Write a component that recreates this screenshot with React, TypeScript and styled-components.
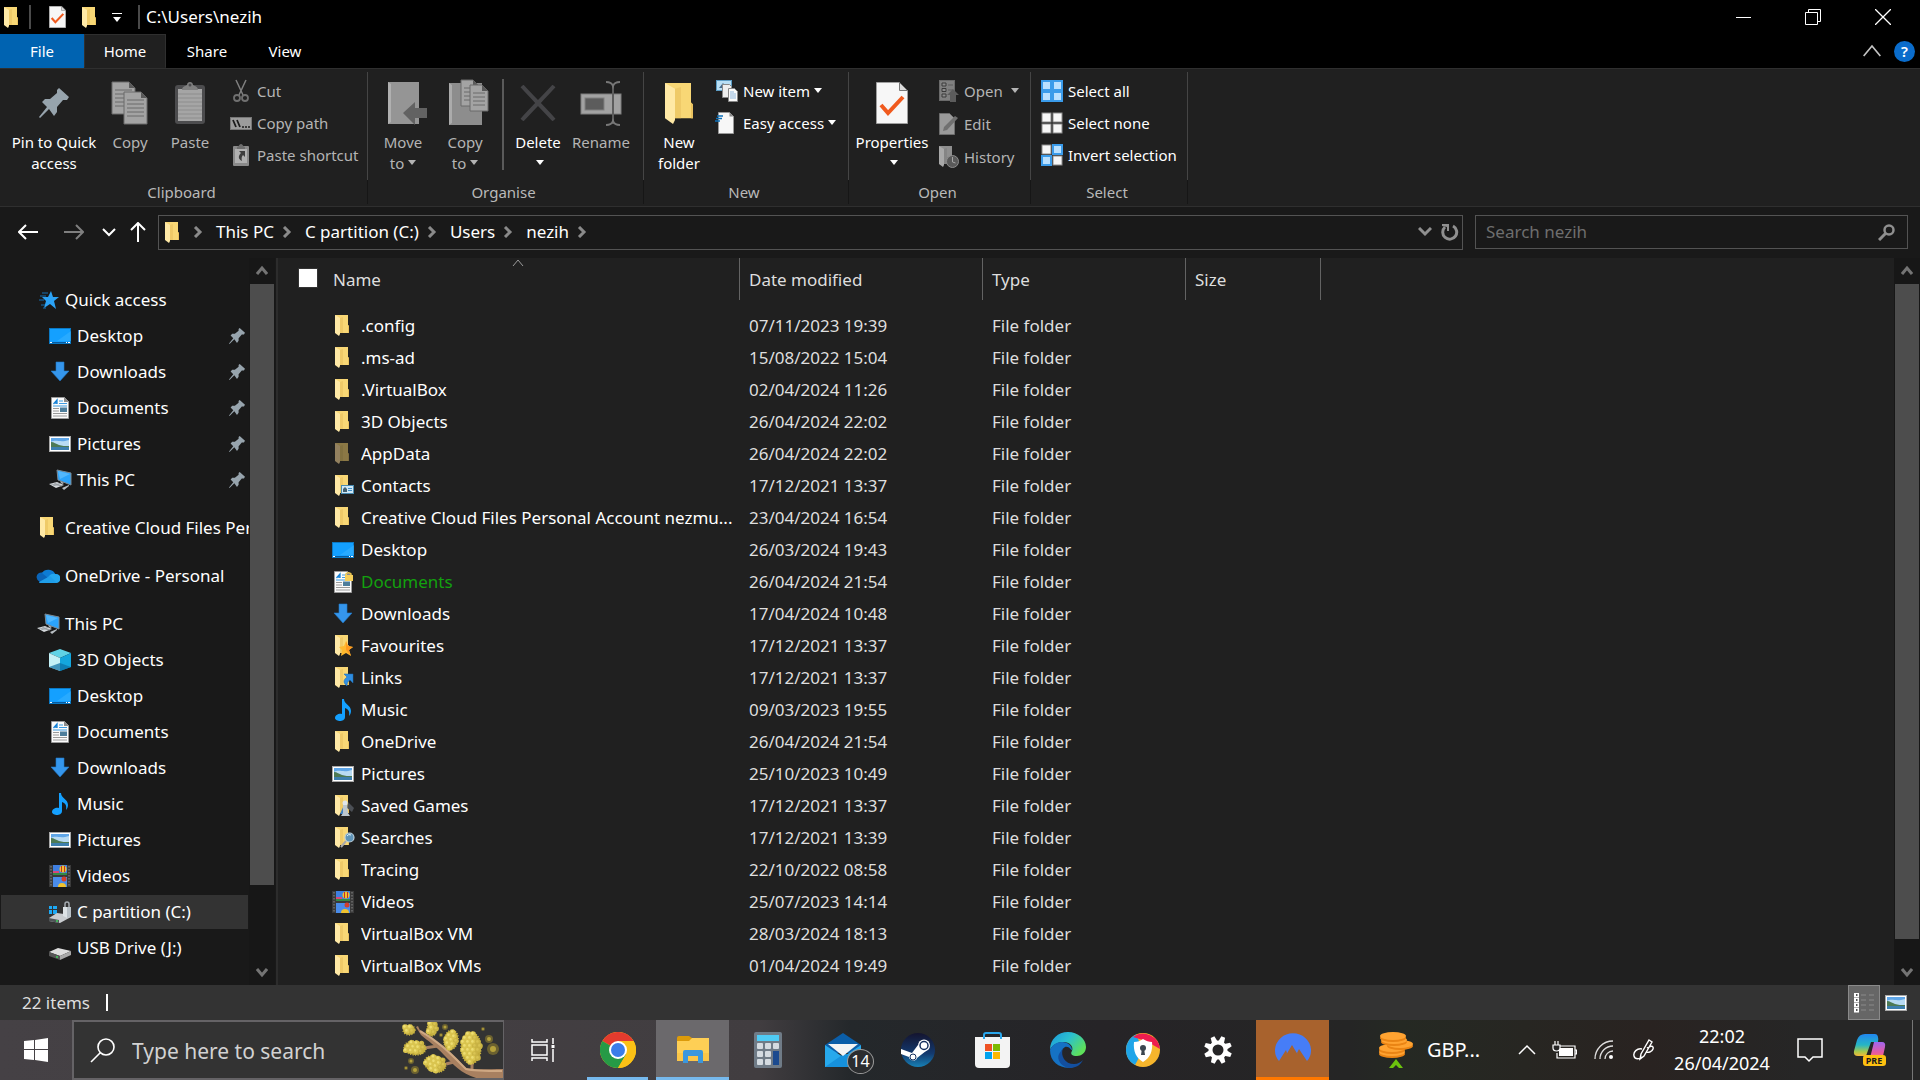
import React from "react";
import styled, { createGlobalStyle, css } from "styled-components";

const GlobalStyle = createGlobalStyle`
  *, *::before, *::after { box-sizing: border-box; }
  body {
    margin: 0;
    background: #191919;
    color: #fff;
    font-family: "Noto Sans", "Segoe UI", sans-serif;
    font-size: 17px;
    line-height: 24px;
  }
  button, input { font: inherit; color: inherit; }
  button { background: none; border: 0; padding: 0; cursor: default; }
  a { color: inherit; text-decoration: none; }
  svg { display: block; flex: none; }
`;

/* ---------- icons ---------- */

type FolderTone = "yellow" | "dim" | "grey";
const folderTones: Record<FolderTone, [string, string, string]> = {
  yellow: ["#f8d775", "#ffe9a6", "#e9c25f"],
  dim: ["#8b7845", "#93815f", "#7d6c3e"],
  grey: ["#8f8f8f", "#a9a9a9", "#7f7f7f"],
};

const FolderShape = ({ tone = "yellow" }: { tone?: FolderTone }) => {
  const [back, flap, edge] = folderTones[tone];
  return (
    <>
      <path d="M0 0h13v10l1 1v7H4z" fill={back} />
      <path d="M13 10l1 1v7h-1z" fill={edge} />
      <path d="M5 3v15h3V2z" fill={edge} opacity=".6" />
      <path d="M0 0l5 3v16l-1 2-4-3z" fill={flap} />
    </>
  );
};

const FolderIcon = ({ w = 14, h = 21, tone }: { w?: number; h?: number; tone?: FolderTone }) => (
  <svg width={w} height={h} viewBox="0 0 14 21" preserveAspectRatio="none" aria-hidden>
    <FolderShape tone={tone} />
  </svg>
);

const Glyph = ({ children }: { children: React.ReactNode }) => (
  <svg width="22" height="22" viewBox="0 0 22 22" overflow="visible" aria-hidden>
    {children}
  </svg>
);

const FolderGlyph = ({ tone, children }: { tone?: FolderTone; children?: React.ReactNode }) => (
  <Glyph>
    <g transform="translate(3 0)">
      <FolderShape tone={tone} />
    </g>
    {children}
  </Glyph>
);

const DocShape = () => (
  <>
    <path d="M2.500.5h13l4 4v17h-17z" fill="#fbfbfb" stroke="#9b9b9b" />
    <path d="M15 0v5h5z" fill="#8d8d8d" />
    <path d="M4.500 7L8 3v4M6 6h2" stroke="#1581d6" strokeWidth="1.300" fill="none" />
    <path d="M10 4h4M10 6.500h8M4 9h14" stroke="#3f9be0" strokeWidth="1.200" />
    <path d="M4 11.500h6M4 14h6M4 16.500h14M4 19h14" stroke="#9a9a9a" />
    <rect x="11" y="10.500" width="7" height="4.500" fill="#4c7d9b" />
  </>
);

const PictureShape = () => (
  <>
    <rect x="0" y="3" width="22" height="16" fill="#a8a8a8" />
    <rect x="1" y="4" width="20" height="14" fill="#fff" />
    <rect x="2" y="5" width="18" height="12" fill="#5fa6e8" />
    <path d="M2 9c5-3 9 1 18-2v6H2z" fill="#b8dbf3" />
    <path d="M2 9c3 0 5 2 8 3s6 1 10 1v2H2z" fill="#4d7a55" />
    <path d="M2 14h18v3H2z" fill="#3d7fae" />
  </>
);

const icons: Record<string, React.ReactNode> = {
  folder: <FolderGlyph />,
  hidden: <FolderGlyph tone="dim" />,
  contacts: (
    <FolderGlyph>
      <rect x="9.500" y="10.500" width="12" height="8" fill="#cfe8f7" stroke="#4a8bb0" />
      <path d="M11 17v-3l2-2 2 2v3z" fill="#44606e" />
      <path d="M16 13.500h4M16 15.500h4" stroke="#3e8fc9" />
    </FolderGlyph>
  ),
  desktop: (
    <Glyph>
      <rect x=".5" y="3.500" width="21" height="15" fill="#14a0ff" stroke="#0b79c4" />
      <path d="M22 6v10H8z" fill="#35b0ff" opacity=".6" />
      <path d="M1 17.500h20" stroke="#075a9e" />
      <path d="M1 17.500h2M17 17.500h1M19 17.500h2" stroke="#fff" />
    </Glyph>
  ),
  documents: (
    <Glyph>
      <DocShape />
    </Glyph>
  ),
  lockedDocuments: (
    <Glyph>
      <DocShape />
      <path d="M14 5V3a3 3 0 0 1 5 0v2" stroke="#e8c24c" strokeWidth="1.500" fill="none" />
      <rect x="13" y="4" width="8" height="6" fill="#f7cf5a" />
    </Glyph>
  ),
  downloads: (
    <Glyph>
      <path d="M7 1h8v9h5l-9 10-9-10h5z" fill="#3596ec" stroke="#2079c9" strokeWidth=".6" />
    </Glyph>
  ),
  favourites: (
    <FolderGlyph>
      <path d="M14 6l2 5 5 1-4 3 2 6-5-3-5 3 1-6-3-3 5-1z" fill="#ffb92e" />
      <path d="M14 6l2 5 5 1-4 3 2 6-5-6z" fill="#ff9a1f" />
    </FolderGlyph>
  ),
  links: (
    <FolderGlyph>
      <path d="M12 7h9v9l-3-3c-2 1-3 3-3 6-4-3-4-6 0-9z" fill="#2f8de0" stroke="#1b68b0" strokeWidth=".5" />
    </FolderGlyph>
  ),
  music: (
    <Glyph>
      <path
        d="M10 0h2c0 5 7 6 7 12 0 2-1 4-2 5 1-5-1-7-4-8v9c0 3-3 4-5 4s-5-1-5-3c0-3 4-5 7-4z"
        fill="#14a0ff"
      />
    </Glyph>
  ),
  pictures: (
    <Glyph>
      <PictureShape />
    </Glyph>
  ),
  savedGames: (
    <FolderGlyph>
      <path d="M16 7l6 6-2 4-5-4z" fill="#4b4f55" />
      <path d="M8 19l4-9 2 9z" fill="#3e7fc1" />
      <circle cx="13" cy="8" r="2.500" fill="#dfe5ea" />
      <path d="M11 10h4l1 8 2 3h-9l2-3z" fill="#bcc6cd" />
    </FolderGlyph>
  ),
  searches: (
    <FolderGlyph>
      <path d="M9 20l5-6" stroke="#a9a9a9" strokeWidth="2" />
      <circle cx="17.500" cy="10.500" r="4.500" fill="#5f94b8" stroke="#bcd0dc" strokeWidth="1.200" />
      <path d="M15 9a3 3 0 0 1 4-1" stroke="#e5f4fc" fill="none" />
    </FolderGlyph>
  ),
  videos: (
    <Glyph>
      <rect width="22" height="22" fill="#3a3a3a" />
      <path d="M2 1v21M20 1v21" stroke="#6f6f6f" strokeWidth="1.500" strokeDasharray="1.500 1.500" />
      <rect x="4" y="0" width="14" height="10" fill="#3f7fe0" />
      <rect x="4" y="12" width="14" height="10" fill="#4a8cea" />
      <circle cx="14" cy="4" r="3.500" fill="#f0c22e" />
      <path d="M12 1h1v6h-1zM15 1h1v6h-1z" fill="#c5302a" />
      <path d="M4 6h6v2H4z" fill="#d8477a" />
      <path d="M4 8h14v2H4z" fill="#338a45" />
      <circle cx="15" cy="14" r="2.500" fill="#d23f2c" />
      <path d="M9 22a4 4 0 0 1 8 0z" fill="#f0c22e" />
    </Glyph>
  ),
  thisPc: (
    <Glyph>
      <path d="M8 1l14 3v12L9 11z" fill="#2ba3fb" stroke="#7d8a94" />
      <path d="M9 2l12 3-10 5z" fill="#6cc4ff" opacity=".6" />
      <path d="M0 15l8-2 7 3-8 3z" fill="#d5d9dc" />
      <path d="M2 15l11 2M5 14l8 3M4 17l8-3" stroke="#8b9197" strokeWidth=".7" />
      <path d="M11 12l4 2-2 1zM13 19l7-3v1l-5 4z" fill="#b9bfc4" />
    </Glyph>
  ),
  onedrive: (
    <svg width="24" height="22" viewBox="0 0 24 22" aria-hidden>
      <path d="M5 9a8 7 0 0 1 14 0z M4 17a5 5 0 0 1-1-9 8 6 0 0 1 8 0l6 4-8 5z" fill="#0a64b8" />
      <path d="M6 8a7 6 0 0 1 13 1l-7 4z" fill="#0d7cd4" />
      <path d="M14 10a6 5 0 0 1 6-1 4 4 0 0 1 0 9H7z" fill="#24a7ef" />
      <path d="M3 17l11-6 7 7H5c-1 0-2 0-2-1z" fill="#1f9ee9" />
    </svg>
  ),
  quick: (
    <Glyph>
      <path d="M14 2l2 6 6 0-5 4 2 8-6-5-6 4 2-7-4-4h6z" fill="#2ba2f5" />
      <path d="M5 4h6M3 7h6M2 11h5M4 16h4M6 19h3" stroke="#1670b3" />
    </Glyph>
  ),
  cube: (
    <Glyph>
      <path d="M11 0l11 4-11 5L0 4z" fill="#5fd3e6" />
      <path d="M0 4l11 5v13L0 18z" fill="#c4f1f6" />
      <path d="M22 4L11 9v13l11-4z" fill="#14a6dd" />
      <path d="M0 18l11-4v8zM22 18l-11-4v8z" fill="#0b6ea3" opacity=".7" />
    </Glyph>
  ),
  cDrive: (
    <Glyph>
      <path d="M0 5h3v3H0zM4 5h4v3H4zM0 9h3v4H0zM4 9h4v4H4z" fill="#1ca9f5" />
      <path d="M0 17l8-5 14 2v2l-11 6-11-2z" fill="#c9cccf" />
      <path d="M0 17l10 2v3L0 20z" fill="#4f5457" />
      <circle cx="8" cy="20" r="1" fill="#3fd35c" />
      <path d="M16 7V3a2 2 0 0 1 4 0v4" stroke="#a5abb0" strokeWidth="1.500" fill="none" />
      <path d="M14 6h8v9l-4 2-4-2z" fill="#b9c1c7" />
      <path d="M14 6h4v11l-4-2z" fill="#dde2e5" />
    </Glyph>
  ),
  usb: (
    <Glyph>
      <path d="M0 15l9-4 13 3-11 5z" fill="#dedede" />
      <path d="M0 15l11 4v4L0 19z" fill="#565656" />
      <path d="M11 19l11-5v4l-11 5z" fill="#a8a8a8" />
      <circle cx="8" cy="20" r="1" fill="#3fd35c" />
    </Glyph>
  ),
};

const PinIcon = ({ size = 16 }: { size?: number }) => (
  <svg width={size} height={size} viewBox="0 0 30 30" aria-hidden>
    <path
      d="M20 0L30 9l-2 3h-4l-6 7v5l-3 4-5-7-9 9-1-1 8-10-5-5 3-3h5l7-6V2z"
      fill="#97a4ad"
    />
  </svg>
);

const PageIcon = ({ x, y, w, h }: { x: number; y: number; w: number; h: number }) => (
  <g transform={`translate(${x} ${y})`}>
    <path d={`M0 0h${w - 6}l6 6v${h - 6}H0z`} fill="#a3a3a3" stroke="#6b6b6b" />
    <path d={`M${w - 6} 0v6h6z`} fill="#5a5a5a" />
    {Array.from({ length: Math.floor((h - 10) / 4) }, (_, i) => (
      <path key={i} d={`M3 ${8 + i * 4}h${w - 6}`} stroke="#6a6a6a" />
    ))}
  </g>
);

const CopyArt = () => (
  <svg width="38" height="44" viewBox="0 0 38 44" aria-hidden>
    <PageIcon x={1} y={1} w={23} h={32} />
    <PageIcon x={13} y={11} w={23} h={32} />
  </svg>
);

const PasteArt = () => (
  <svg width="32" height="44" viewBox="0 0 32 44" aria-hidden>
    <rect x="1" y="4" width="30" height="39" rx="3" fill="#4c4c4e" />
    <rect x="4" y="8" width="24" height="32" fill="#a5a5a5" />
    <path d="M4 13h24M4 17h24M4 21h24M4 25h24M4 29h24M4 33h24M4 37h24" stroke="#8d8d8d" />
    <path d="M8 9c0-4 4-4 5-5 0-4 6-4 6 0 1 1 5 1 5 5z" fill="#808080" />
    <circle cx="16" cy="4" r="1.500" fill="#4c4c4e" />
  </svg>
);

const MoveArt = () => (
  <svg width="48" height="44" viewBox="-8 0 48 44" aria-hidden>
    <rect x="1" y="1" width="31" height="42" fill="#959595" />
    <path d="M1 1l3 2v38l-3 2z" fill="#b0b0b0" />
    <path d="M16 32l12-11v6h12v10H28v7z" fill="#626262" />
  </svg>
);

const CopyToArt = () => (
  <svg width="50" height="48" viewBox="-8 0 50 48" aria-hidden>
    <rect x="1" y="4" width="33" height="42" fill="#8d8d8d" />
    <path d="M1 4l3 2v38l-3 2z" fill="#ababab" />
    <PageIcon x={13} y={1} w={18} h={26} />
    <PageIcon x={22} y={6} w={18} h={26} />
  </svg>
);

const DeleteArt = () => (
  <svg width="36" height="36" viewBox="0 0 36 36" aria-hidden>
    <path d="M2 1C12 12 24 24 34 35M34 1C24 12 12 24 2 35" stroke="#444447" strokeWidth="4" />
  </svg>
);

const RenameArt = () => (
  <svg width="42" height="46" viewBox="0 -4 42 46" aria-hidden>
    <rect x="1" y="10" width="40" height="20" fill="#a2a2a2" stroke="#7d7d7d" />
    <rect x="5" y="14" width="19" height="12" fill="#5c5c5c" stroke="#808080" />
    <path d="M33 0v40" stroke="#5d5d5d" strokeWidth="2" />
    <path d="M26-2c4 0 6 1 7 4 1-3 3-4 7-4M26 41c4 0 6-1 7-4 1 3 3 4 7 4" stroke="#777" strokeWidth="2" fill="none" />
  </svg>
);

const CheckPage = ({ w, h }: { w: number; h: number }) => (
  <svg width={w} height={h} viewBox="0 0 32 42" preserveAspectRatio="none" aria-hidden>
    <path d="M.5.5h23l8 8v33H.5z" fill="#f7f7f7" stroke="#9f9f9f" />
    <path d="M23.500.5v8h8z" fill="#dcdcdc" stroke="#777" />
    <path d="M5 23l7 8L27 15" stroke="#f05a1e" strokeWidth="4" fill="none" />
  </svg>
);

const Caret = styled.span`
  display: inline-block;
  border: 4px solid transparent;
  border-top: 5px solid currentColor;
  border-bottom: 0;
  margin: 0 0 4px 4px;
  vertical-align: middle;
`;

const smallArt: Record<string, React.ReactNode> = {
  cut: (
    <Glyph>
      <path d="M6 0l7 15M16 0L9 15" stroke="#808080" strokeWidth="1.500" />
      <circle cx="7" cy="18" r="3" fill="none" stroke="#707070" strokeWidth="1.800" />
      <circle cx="15" cy="18" r="3" fill="none" stroke="#707070" strokeWidth="1.800" />
    </Glyph>
  ),
  path: (
    <Glyph>
      <rect x=".5" y="5.500" width="21" height="12" fill="#9c9c9c" stroke="#777" />
      <path d="M3 8l3 7M7 8l3 7" stroke="#1c1c1c" strokeWidth="1.800" />
      <path d="M12 15h2M15 15h2M18 15h2" stroke="#1c1c1c" strokeWidth="1.500" />
    </Glyph>
  ),
  pasteShortcut: (
    <Glyph>
      <rect x="3" y="2" width="16" height="20" rx="1" fill="#8a8a8a" />
      <rect x="5" y="5" width="12" height="14" fill="#b0b0b0" />
      <path d="M7 3c2 0 2-3 4-3s2 3 4 3v2H7z" fill="#6e6e6e" />
      <path d="M9 7h6v6l-2-2c-1 1-2 3-1 6-4-2-4-5-1-8z" fill="#3d3d3d" />
    </Glyph>
  ),
  newItem: (
    <Glyph>
      <rect x=".5" y=".5" width="15" height="10" fill="#b9dff5" stroke="#5c9cc4" />
      <path d="M3 8l4-5 4 5z" fill="#43698a" />
      <path d="M6.500 4.500h7l2 2v11h-9z" fill="#eee" stroke="#888" />
      <path d="M12.500 8.500h6l3 3v10h-9z" fill="#fafafa" stroke="#888" />
      <path d="M14 12h4M14 14h6M14 16h6M14 18h6" stroke="#8fb7dc" />
    </Glyph>
  ),
  easy: (
    <Glyph>
      <path d="M2.500.5h11l4 4v17h-15z" fill="#f7f7f7" stroke="#999" />
      <path d="M13.500.5v4h4z" fill="#888" />
      <path d="M1 4h6M0 6.500h6M-1 9h5" stroke="#0d6fb8" strokeWidth="1.500" />
    </Glyph>
  ),
  open: (
    <Glyph>
      <rect x="2.500" y=".5" width="15" height="20" fill="#808080" stroke="#6a6a6a" />
      <path d="M5 3h4v3H5zM5 8.500h4v3H5zM5 14h4v3H5z" fill="#8c8c8c" stroke="#3a3a3a" />
      <path d="M11 5h5M11 10h5" stroke="#5d5d5d" />
      <path d="M16 9l6 6h-3v7h-6v-7h-3z" fill="#5c5c5c" />
    </Glyph>
  ),
  edit: (
    <Glyph>
      <path d="M2.500.5h10l5 5v16h-15z" fill="#9a9a9a" stroke="#6e6e6e" />
      <path d="M6 18l1-4L18 3l3 2L10 17z" fill="#707070" />
    </Glyph>
  ),
  history: (
    <Glyph>
      <g transform="translate(2 0)">
        <FolderShape tone="grey" />
      </g>
      <circle cx="15.500" cy="15.500" r="6" fill="#5a5a5a" stroke="#8d8d8d" />
      <path d="M15.500 11v5l3 1" stroke="#a5a5a5" fill="none" />
    </Glyph>
  ),
};

const SelectGrid = ({ on }: { on: boolean[] }) => (
  <Glyph>
    {on.map((active, i) => (
      <rect
        key={i}
        x={(i % 2) * 11 + 1}
        y={Math.floor(i / 2) * 11 + 1}
        width="9"
        height="9"
        fill={active ? "#b9e0ff" : "#f7f7f7"}
        stroke={active ? "#3a9bea" : "#8d8d8d"}
        strokeWidth={active ? 2 : 1}
      />
    ))}
  </Glyph>
);

const Chevron = ({
  dir,
  size = 12,
  color = "#fff",
  weight = 2,
}: {
  dir: "up" | "down" | "right";
  size?: number;
  color?: string;
  weight?: number;
}) => {
  const paths = { up: "M1 9l5-6 5 6", down: "M1 3l5 6 5-6", right: "M3 1l5 5-5 5" };
  return (
    <svg width={size} height={size} viewBox="0 0 12 12" aria-hidden>
      <path d={paths[dir]} stroke={color} strokeWidth={weight} fill="none" />
    </svg>
  );
};

/* ---------- window frame ---------- */

const Screen = styled.div`
  display: flex;
  flex-direction: column;
  height: 100vh;
  overflow: hidden;
`;

const TitleBar = styled.header`
  display: flex;
  align-items: center;
  height: 34px;
  padding: 0 2px 0 4px;
  background: #000;
`;

const QuickTools = styled.div`
  display: flex;
  align-items: center;
  gap: 16px;
  padding: 0 16px 0 18px;
  margin: 0 6px 0 11px;
  height: 24px;
  border: solid #4a4a4a;
  border-width: 0 2px;
`;

const WindowTitle = styled.h1`
  flex: 1;
  margin: 0;
  font-size: 17px;
  font-weight: 400;
`;

const WindowButton = styled.button`
  display: grid;
  place-items: center;
  width: 70px;
  height: 34px;
`;

const TabBar = styled.nav`
  display: flex;
  align-items: stretch;
  height: 34px;
  background: #000;
`;

const Tab = styled.button<{ $w: number; $kind?: "file" | "active" }>`
  width: ${(p) => p.$w}px;
  font-size: 15px;
  ${(p) => p.$kind === "file" && css`background: #0063b1;`}
  ${(p) => p.$kind === "active" && css`background: #202020; border: 1px solid #2f2f2f; border-bottom-color: #202020;`}
`;

const TabTools = styled.div`
  display: flex;
  align-items: center;
  gap: 12px;
  margin-left: auto;
  padding-right: 5px;
`;

const HelpButton = styled.button`
  width: 21px;
  height: 21px;
  border-radius: 50%;
  background: #0a6ccb;
  font-size: 15px;
  font-weight: 600;
  line-height: 21px;
`;

/* ---------- ribbon ---------- */

const Ribbon = styled.section`
  display: flex;
  flex: none;
  height: 139px;
  background: #202020;
  border: solid #2f2f2f;
  border-width: 1px 0;
  font-size: 15px;
  line-height: 21px;
`;

const Group = styled.section<{ $w: number }>`
  display: flex;
  flex-direction: column;
  width: ${(p) => p.$w}px;
  padding-top: 3px;
`;

const GroupBody = styled.div`
  display: flex;
  flex: 1;
  padding: 0 4px;
  border-right: 1px solid #454545;
`;

const GroupName = styled.h2`
  margin: 0 0 2px;
  padding: 2px 4px 1px 0;
  border-right: 1px solid #161616;
  color: #b9b9b9;
  font-size: 15px;
  font-weight: 400;
  text-align: center;
`;

const BigButton = styled.button<{ $w: number; $off?: boolean }>`
  display: flex;
  flex-direction: column;
  align-items: center;
  gap: 5px;
  width: ${(p) => p.$w}px;
  padding-top: 7px;
  color: ${(p) => (p.$off ? "#b4b4b4" : "#fff")};
  line-height: 21px;
`;

const BigArt = styled.span`
  display: grid;
  place-items: center;
  height: 48px;
`;

const BigLabel = styled.span`
  display: block;
  white-space: nowrap;
`;

const CommandList = styled.div<{ $gap?: number }>`
  display: flex;
  flex-direction: column;
  gap: ${(p) => p.$gap ?? 0}px;
  margin-left: 6px;
  padding-top: 3px;
`;

const Command = styled.button<{ $off?: boolean }>`
  display: flex;
  align-items: center;
  gap: 5px;
  height: 32px;
  white-space: nowrap;
  color: ${(p) => (p.$off ? "#b4b4b4" : "#fff")};
`;

const Divider = styled.span`
  width: 2px;
  margin: 7px 2px 10px 6px;
  background: #5a5a5a;
`;

/* ---------- address row ---------- */

const AddressRow = styled.div`
  display: flex;
  flex: none;
  align-items: center;
  height: 51px;
  padding: 0 12px 1px 8px;
  background: #191919;
`;

const NavButton = styled.button<{ $w: number }>`
  display: grid;
  place-items: center;
  width: ${(p) => p.$w}px;
  height: 35px;
`;

const AddressBox = styled.div`
  display: flex;
  flex: 1;
  align-items: center;
  height: 35px;
  padding-left: 6px;
  border: 1px solid #535353;
`;

const Crumbs = styled.nav`
  display: flex;
  flex: 1;
  align-items: center;
  padding-left: 6px;
`;

const Crumb = styled.a`
  display: flex;
  align-items: center;
  white-space: nowrap;
`;

const CrumbArrow = styled.span`
  margin: 0 12px 0 7px;
`;

const SearchBox = styled.label`
  display: flex;
  align-items: center;
  width: 433px;
  height: 34px;
  margin-left: 12px;
  padding: 0 12px 0 10px;
  border: 1px solid #535353;
`;

const SearchInput = styled.input`
  flex: 1;
  min-width: 0;
  padding: 0;
  border: 0;
  outline: 0;
  background: none;
  &::placeholder { color: #6e6e6e; opacity: 1; }
`;

/* ---------- body ---------- */

const Body = styled.div`
  display: flex;
  flex: 1;
  min-height: 0;
`;

const Sidebar = styled.nav`
  width: 249px;
  padding: 24px 1px 0;
  overflow: hidden;
  background: #191919;
`;

const TreeGroup = styled.ul`
  margin: 0 0 12px;
  padding: 0;
  list-style: none;
`;

const TreeRow = styled.li`
  padding: 1px 0;
`;

const TreeLink = styled.a<{ $level: number; $active?: boolean }>`
  display: flex;
  align-items: center;
  gap: ${(p) => (p.$level ? 6 : 5)}px;
  height: 34px;
  padding-left: ${(p) => (p.$level ? 48 : 35)}px;
  padding-right: 3px;
  white-space: nowrap;
  background: ${(p) => (p.$active ? "#333" : "none")};
`;

const TreeArt = styled.span<{ $level: number }>`
  display: grid;
  place-items: center;
  flex: none;
  width: ${(p) => (p.$level ? 22 : 24)}px;
`;

const TreeText = styled.span`
  flex: 1;
`;

const ScrollTrack = styled.div`
  display: flex;
  flex-direction: column;
  align-items: center;
  width: 26px;
  background: #171717;
`;

const ScrollEnd = styled.button`
  display: grid;
  place-items: center;
  width: 24px;
  height: 26px;
`;

const ScrollRoom = styled.div`
  flex: 1;
  align-self: stretch;
  padding: 0 1px;
`;

const Thumb = styled.div<{ $size: number }>`
  height: ${(p) => p.$size}%;
  background: #4d4d4d;
`;

const Splitter = styled.div`
  width: 4px;
  border-left: 1px solid #191919;
  border-right: 1px solid #202020;
  background: #2c2c2c;
`;

const FilePane = styled.main`
  flex: 1;
  overflow: hidden;
  background: #202020;
`;

const FileTable = styled.table`
  width: 100%;
  table-layout: fixed;
  border-collapse: separate;
  border-spacing: 0;
  tbody::before { content: ""; display: block; height: 10px; }
`;

const Col = styled.col<{ $w?: number }>`
  width: ${(p) => (p.$w ? `${p.$w}px` : "auto")};
`;

const HeadCell = styled.th`
  position: relative;
  height: 42px;
  padding: 1px 9px 0 9px;
  border-right: 1px solid #636363;
  color: #dedede;
  font-weight: 400;
  text-align: left;
  &:first-child { padding-left: 20px; }
  &:last-child { border-right: 0; }
`;

const HeadName = styled.div`
  display: flex;
  align-items: center;
  gap: 15px;
`;

const SelectAllBox = styled.input`
  appearance: none;
  width: 20px;
  height: 20px;
  margin: 0 0 3px -1px;
  border: 1px solid #333;
  background: #fff;
`;

const SortMark = styled.span`
  position: absolute;
  top: -1px;
  left: 18px;
  right: 0;
  display: grid;
  place-items: center;
`;

const Cell = styled.td`
  height: 32px;
  padding: 0 9px;
  color: #dedede;
  white-space: nowrap;
  &:first-child { padding: 0 2px 0 53px; color: #fff; }
`;

const FileLink = styled.a<{ $encrypted?: boolean }>`
  display: flex;
  align-items: center;
  gap: 7px;
  color: ${(p) => (p.$encrypted ? "#13a10e" : "#fff")};
`;

const FileName = styled.span`
  overflow: hidden;
  text-overflow: ellipsis;
`;

/* ---------- status bar ---------- */

const StatusBar = styled.footer`
  display: flex;
  flex: none;
  align-items: center;
  height: 35px;
  padding: 0 8px 0 22px;
  background: #333;
  color: #dedede;
`;

const StatusMark = styled.span`
  width: 2px;
  height: 17px;
  margin-left: 16px;
  margin-right: auto;
  background: #fff;
`;

const ViewButton = styled.button<{ $on?: boolean }>`
  display: grid;
  place-items: center;
  width: 32px;
  height: 35px;
  ${(p) => p.$on && css`background: #666; border: 1px solid #8a8a8a;`}
`;

/* ---------- taskbar ---------- */

const Taskbar = styled.footer`
  display: flex;
  flex: none;
  height: 60px;
  background: linear-gradient(90deg, #454145 0, #413d40 760px, #24282b 850px, #262427 1100px, #252525 1350px, #252923 1400px, #292321 1650px, #262626 1800px);
`;

const StartButton = styled.button`
  display: grid;
  place-items: center;
  width: 72px;
`;

const TaskSearch = styled.label`
  display: flex;
  align-items: center;
  width: 432px;
  padding-left: 16px;
  border: 2px solid #656366;
  border-right-width: 1px;
  background: #333;
  overflow: hidden;
`;

const TaskSearchInput = styled.input`
  flex: 1;
  min-width: 0;
  height: 32px;
  margin-left: 17px;
  padding: 2px 0 0;
  border: 0;
  outline: 0;
  background: none;
  font-size: 21px;
  &::placeholder { color: #d2d2d2; opacity: 1; }
`;

const AppStrip = styled.div`
  display: flex;
  gap: 2px;
  margin-left: 2px;
`;

const AppButton = styled.button<{ $bg?: string; $bar?: string; $barInset?: number }>`
  position: relative;
  display: grid;
  place-items: center;
  width: 73px;
  background: ${(p) => p.$bg ?? "none"};
  ${(p) =>
    p.$bar &&
    css`
      &::after {
        content: "";
        position: absolute;
        bottom: 0;
        left: ${p.$barInset ?? 0}px;
        right: ${p.$barInset ?? 0}px;
        height: 3px;
        background: ${p.$bar};
      }
    `}
`;

const Badge = styled.span`
  position: absolute;
  left: 41px;
  top: 29px;
  width: 27px;
  height: 25px;
  border: 1px solid #9c9c9c;
  border-radius: 50%;
  background: #2b2d2f;
  font-size: 16px;
  line-height: 23px;
  text-align: center;
`;

const Tray = styled.div`
  display: flex;
  margin-left: auto;
`;

const NewsButton = styled.button`
  display: flex;
  align-items: center;
  gap: 12px;
  width: 140px;
  padding-left: 9px;
  font-size: 20px;
`;

const TrayButton = styled.button<{ $w: number }>`
  display: grid;
  place-items: center;
  width: ${(p) => p.$w}px;
`;

const Clock = styled.button`
  width: 116px;
  font-size: 18px;
  line-height: 27px;
`;

const PeekEdge = styled.span`
  width: 8px;
  margin-left: 12px;
  border-left: 1px solid #767676;
`;

/* ---------- drawings for the taskbar ---------- */

const Blossom = ({ cx, cy, rx, ry, tilt = 0 }: { cx: number; cy: number; rx: number; ry: number; tilt?: number }) => {
  const dots: [number, number, number][] = [];
  for (let y = -ry + 2, row = 0; y <= ry - 1; y += 4, row++)
    for (let x = -rx + 2 + (row % 2) * 2; x <= rx - 1; x += 5)
      if ((x * x) / (rx * rx) + (y * y) / (ry * ry) < 0.9) dots.push([x, y, row]);
  return (
    <g transform={`rotate(${tilt} ${cx} ${cy})`}>
      <ellipse
        cx={cx}
        cy={cy}
        rx={rx}
        ry={ry}
        fill="#c0a93a"
        stroke="#c9b443"
        strokeWidth="1.500"
        strokeDasharray="1 1.500"
      />
      {dots.map(([x, y], i) => (
        <g key={i}>
          <circle cx={cx + x} cy={cy + y} r="2.800" fill={x > rx / 3 ? "#c9b344" : "#dac550"} />
          <circle cx={cx + x - 0.6} cy={cy + y - 0.6} r="1.300" fill={x > rx / 3 ? "#d8c352" : "#eddd72"} />
        </g>
      ))}
    </g>
  );
};

const MimosaArt = () => (
  <svg width="101" height="58" viewBox="0 0 101 58" aria-hidden>
    {[[43, 6, 3], [87, 18, 4], [91, 28, 6], [13, 49, 4], [9, 40, 3], [81, 8, 2], [39, 14, 2], [4, 47, 2]].map(
      ([x, y, r], i) => (
        <g key={i}>
          <circle cx={x} cy={y} r={r} fill="#6b6130" />
          <circle cx={x} cy={y} r={r / 2} fill="#b5a13b" />
        </g>
      ),
    )}
    <path d="M22 27l14-2M44 43l12-3M70 34v14M46 24v-6" stroke="#a88060" strokeWidth="3" />
    <path d="M16 5c2 6 6 9 12 12 14 8 26 20 36 30 8 2 20 1 37 1v10H78C60 54 52 44 42 34 34 25 26 20 19 14l-5-8z" fill="#a88060" />
    <path d="M18 10c20 11 32 24 46 38 8 2 22 2 36 2" stroke="#cfa883" strokeWidth="2" fill="none" />
    <Blossom cx={7} cy={9} rx={6} ry={5} />
    <Blossom cx={30} cy={8} rx={5} ry={7} tilt={10} />
    <Blossom cx={49} cy={19} rx={7} ry={10} tilt={12} />
    <Blossom cx={69} cy={27} rx={10} ry={16} />
    <Blossom cx={13} cy={27} rx={11} ry={7} tilt={5} />
    <Blossom cx={33} cy={43} rx={11} ry={8} tilt={20} />
  </svg>
);

const ChromeLogo = () => (
  <svg width="36" height="36" viewBox="0 0 36 36" aria-hidden>
    <circle cx="18" cy="18" r="18" fill="#fbc116" />
    <path d="M18 18L2.400 9A18 18 0 0 1 33.600 9z" fill="#e33b2e" />
    <path d="M2.400 9A18 18 0 0 0 18 36l8-13.500-8-4.500z" fill="#269a46" />
    <path d="M33.600 9H18v9l8 4.500L18 36A18 18 0 0 0 33.600 9z" fill="#fbc116" />
    <circle cx="18" cy="18" r="9" fill="#fff" />
    <circle cx="18" cy="18" r="7" fill="#3b7de9" />
  </svg>
);

const ExplorerLogo = () => (
  <svg width="32" height="28" viewBox="0 0 32 28" aria-hidden>
    <path d="M0 2h32v23H0z" fill="#fecf55" />
    <path d="M0 17h32v8H0z" fill="#fbc648" />
    <path d="M0 5V2q0-2 2-2h10l3 2-3 3z" fill="#dc9b0a" />
    <path d="M6 27V16q0-2 2-2h16q2 0 2 2v11h-5v-7H11v7z" fill="#3b97dd" />
  </svg>
);

const CalcLogo = () => (
  <svg width="28" height="36" viewBox="0 0 28 36" aria-hidden>
    <rect width="28" height="36" rx="2" fill="#6f7b87" />
    <rect x="3" y="3" width="22" height="6" fill="#4fcbf5" />
    {[0, 1, 2].map((r) =>
      [0, 1, 2].map((c) => (
        <rect key={`${r}${c}`} x={3 + c * 8} y={11 + r * 8} width="6" height="6" rx="1" fill="#d4dbe1" />
      )),
    )}
    <rect x="19" y="19" width="6" height="14" fill="#1b4a8f" />
  </svg>
);

const MailLogo = () => (
  <svg width="36" height="34" viewBox="0 0 36 34" aria-hidden>
    <path d="M0 12L18 0l18 12v8H0z" fill="#0b5ea8" />
    <path d="M0 12l18 12 18-12v22H0z" fill="#27a9ec" />
    <path d="M0 34l20-14 16 14z" fill="#1691dc" />
    <path d="M3 11h30L18 23z" fill="#f4f4f4" />
  </svg>
);

const SteamLogo = () => (
  <svg width="34" height="34" viewBox="0 0 34 34" aria-hidden>
    <defs>
      <linearGradient id="steam" x1="0" y1="0" x2="0" y2="1">
        <stop offset="0" stopColor="#14142f" />
        <stop offset=".6" stopColor="#13396e" />
        <stop offset="1" stopColor="#1781b6" />
      </linearGradient>
    </defs>
    <circle cx="17" cy="17" r="17" fill="url(#steam)" />
    <path d="M0 16l11 4 6-8 8 6-9 7c-1 4-8 3-8-1L0 21z" fill="#fff" />
    <circle cx="23" cy="12.500" r="6" fill="#fff" />
    <circle cx="23" cy="12.500" r="4" fill="#fff" stroke="#16305e" strokeWidth="1.500" />
    <circle cx="12" cy="24" r="3" fill="none" stroke="#16305e" />
  </svg>
);

const StoreLogo = () => (
  <svg width="35" height="36" viewBox="0 0 35 36" aria-hidden>
    <path d="M9 8V3q0-2 2-2h13q2 0 2 2v5" stroke="#2ba7ec" strokeWidth="2" fill="none" />
    <path d="M0 5h35v27q0 4-4 4H4q-4 0-4-4z" fill="#f3f3f3" />
    <path d="M9 7V4M26 7V4" stroke="#2ba7ec" strokeWidth="2" />
    <path d="M10 12h7v7h-7z" fill="#ef5223" />
    <path d="M18 12h7v7h-7z" fill="#7cba02" />
    <path d="M10 20h7v7h-7z" fill="#02a2ee" />
    <path d="M18 20h7v7h-7z" fill="#fdb700" />
  </svg>
);

const EdgeLogo = () => (
  <svg width="36" height="36" viewBox="0 0 36 36" aria-hidden>
    <defs>
      <linearGradient id="edgeTop" x1="0" y1="0" x2="1" y2=".6">
        <stop offset="0" stopColor="#1a95dc" />
        <stop offset=".5" stopColor="#2bc0cf" />
        <stop offset="1" stopColor="#5ee05a" />
      </linearGradient>
    </defs>
    <path d="M0 18C0 7 8 0 18 0s18 7 18 15c0 6-5 9-9 9-5 0-7-2-5-5 2-5-3-9-8-9C7 10 2 13 0 18z" fill="url(#edgeTop)" />
    <path d="M0 18c2-5 6-8 12-8 6 0 10 4 10 8-1 1-2-4-7-3-4 2-5 8-2 13s8 7 11 7C13 38 0 32 0 18z" fill="#1572c4" />
    <path d="M13 16c-3 8 2 16 11 16 4 0 7-2 9-4-3 6-8 8-14 8-7-1-13-8-10-14z" fill="#134f9f" />
  </svg>
);

const ShieldLogo = () => (
  <svg width="34" height="34" viewBox="0 0 34 34" aria-hidden>
    <circle cx="17" cy="17" r="17" fill="#f6b52c" />
    <path d="M17 17L10 1.500A17 17 0 0 0 9 32z" fill="#1fa5e8" />
    <path d="M7 4A17 17 0 0 1 34 16L20 8z" fill="#ee1c4f" />
    <path d="M8 9c4 0 6-1 9-3 3 2 6 3 9 3 1 9-2 16-9 20C10 25 7 18 8 9z" fill="#fff" />
    <circle cx="17" cy="15" r="3" fill="#3c4650" />
    <path d="M16 15h2l1 7h-4z" fill="#3c4650" />
  </svg>
);

const GearLogo = () => (
  <svg width="28" height="28" viewBox="0 0 28 28" aria-hidden>
    {[0, 45, 90, 135, 180, 225, 270, 315].map((a) => (
      <path key={a} d="M12 0h4l1 6h-6z" fill="#fff" transform={`rotate(${a + 22} 14 14)`} />
    ))}
    <circle cx="14" cy="14" r="7.500" fill="none" stroke="#fff" strokeWidth="4" />
  </svg>
);

const NordLogo = () => (
  <svg width="36" height="36" viewBox="0 0 36 36" aria-hidden>
    <path d="M4 29A18 17 0 1 1 32 29l-8-12-2 4 1 2-6-10-6 10 1-2-1-3z" fill="#467df7" />
  </svg>
);

const CoinsArt = () => (
  <svg width="36" height="36" viewBox="0 0 36 36" aria-hidden>
    {[
      [13, 20], [13, 16], [21, 12], [15, 8], [14, 4],
    ].map(([x, y], i) => (
      <g key={i}>
        <ellipse cx={x} cy={y + 2} rx="13" ry="4" fill="#ea8414" />
        <ellipse cx={x} cy={y} rx="13" ry="4" fill="#ffa331" />
      </g>
    ))}
    <path d="M10 36l7-9 7 9h-4l-3-3-3 3z" fill="#6cc30e" />
  </svg>
);

const CopilotArt = () => (
  <svg width="34" height="32" viewBox="0 0 34 32" overflow="visible" aria-hidden>
    <defs>
      <linearGradient id="ribbonA" x1="0" y1="0" x2="0" y2="1">
        <stop offset="0" stopColor="#2086f0" />
        <stop offset=".5" stopColor="#26b6c4" />
        <stop offset=".8" stopColor="#a8c94a" />
        <stop offset="1" stopColor="#f4b73a" />
      </linearGradient>
      <linearGradient id="ribbonB" x1="0" y1="0" x2="0" y2="1">
        <stop offset="0" stopColor="#a066f0" />
        <stop offset=".6" stopColor="#e85aa0" />
        <stop offset="1" stopColor="#f88a5a" />
      </linearGradient>
    </defs>
    <path d="M22 0q4 0 3 8h-7l-5 14H5q-5 0-4-5L4 6q2-6 8-6z" fill="url(#ribbonA)" />
    <path d="M21 8h8q4 0 3 5l-2 9q-2 4-6 4H14q3 0 4-6z" fill="url(#ribbonB)" />
    <rect x="10" y="21" width="23" height="11" rx="3" fill="#fdc010" />
    <text x="21" y="30" fontSize="9" fontWeight="700" textAnchor="middle" fill="#1a1a1a">
      PRE
    </text>
  </svg>
);

/* ---------- data ---------- */

type TreeItem = { icon: string; label: string; level: number; pin?: boolean; active?: boolean };

const tree: TreeItem[][] = [
  [
    { icon: "quick", label: "Quick access", level: 0 },
    { icon: "desktop", label: "Desktop", level: 1, pin: true },
    { icon: "downloads", label: "Downloads", level: 1, pin: true },
    { icon: "documents", label: "Documents", level: 1, pin: true },
    { icon: "pictures", label: "Pictures", level: 1, pin: true },
    { icon: "thisPc", label: "This PC", level: 1, pin: true },
  ],
  [{ icon: "folder", label: "Creative Cloud Files Per", level: 0 }],
  [{ icon: "onedrive", label: "OneDrive - Personal", level: 0 }],
  [
    { icon: "thisPc", label: "This PC", level: 0 },
    { icon: "cube", label: "3D Objects", level: 1 },
    { icon: "desktop", label: "Desktop", level: 1 },
    { icon: "documents", label: "Documents", level: 1 },
    { icon: "downloads", label: "Downloads", level: 1 },
    { icon: "music", label: "Music", level: 1 },
    { icon: "pictures", label: "Pictures", level: 1 },
    { icon: "videos", label: "Videos", level: 1 },
    { icon: "cDrive", label: "C partition (C:)", level: 1, active: true },
    { icon: "usb", label: "USB Drive (J:)", level: 1 },
  ],
];

const files: [string, string, string][] = [
  ["folder", ".config", "07/11/2023 19:39"],
  ["folder", ".ms-ad", "15/08/2022 15:04"],
  ["folder", ".VirtualBox", "02/04/2024 11:26"],
  ["folder", "3D Objects", "26/04/2024 22:02"],
  ["hidden", "AppData", "26/04/2024 22:02"],
  ["contacts", "Contacts", "17/12/2021 13:37"],
  ["folder", "Creative Cloud Files Personal Account nezmu...", "23/04/2024 16:54"],
  ["desktop", "Desktop", "26/03/2024 19:43"],
  ["lockedDocuments", "Documents", "26/04/2024 21:54"],
  ["downloads", "Downloads", "17/04/2024 10:48"],
  ["favourites", "Favourites", "17/12/2021 13:37"],
  ["links", "Links", "17/12/2021 13:37"],
  ["music", "Music", "09/03/2023 19:55"],
  ["folder", "OneDrive", "26/04/2024 21:54"],
  ["pictures", "Pictures", "25/10/2023 10:49"],
  ["savedGames", "Saved Games", "17/12/2021 13:37"],
  ["searches", "Searches", "17/12/2021 13:39"],
  ["folder", "Tracing", "22/10/2022 08:58"],
  ["videos", "Videos", "25/07/2023 14:14"],
  ["folder", "VirtualBox VM", "28/03/2024 18:13"],
  ["folder", "VirtualBox VMs", "01/04/2024 19:49"],
];

const Big = ({
  art,
  lines,
  w,
  off,
  menu,
}: {
  art: React.ReactNode;
  lines: string[];
  w: number;
  off?: boolean;
  menu?: boolean;
}) => (
  <BigButton $w={w} $off={off}>
    <BigArt>{art}</BigArt>
    <span>
      {lines.map((line, i) => (
        <BigLabel key={line}>
          {line}
          {menu && i === 1 && <Caret />}
        </BigLabel>
      ))}
      {menu && lines.length === 1 && (
        <BigLabel>
          <Caret />
        </BigLabel>
      )}
    </span>
  </BigButton>
);

const ScrollBar = ({ size }: { size: number }) => (
  <ScrollTrack>
    <ScrollEnd aria-label="Scroll up">
      <Chevron dir="up" color="#747474" weight={3} />
    </ScrollEnd>
    <ScrollRoom>
      <Thumb $size={size} />
    </ScrollRoom>
    <ScrollEnd aria-label="Scroll down">
      <Chevron dir="down" color="#747474" weight={3} />
    </ScrollEnd>
  </ScrollTrack>
);

const App = () => (
  <Screen>
    <GlobalStyle />
    <TitleBar>
      <FolderIcon />
      <QuickTools>
        <CheckPage w={17} h={22} />
        <FolderIcon />
        <svg width="10" height="9" viewBox="0 0 10 9" aria-hidden>
          <path d="M0 .5h10" stroke="#fff" />
          <path d="M1 4h8L5 9z" fill="#fff" />
        </svg>
      </QuickTools>
      <WindowTitle>C:\Users\nezih</WindowTitle>
      <WindowButton aria-label="Minimise">
        <svg width="15" height="15" viewBox="0 0 15 15"><path d="M0 7.500h15" stroke="#fff" /></svg>
      </WindowButton>
      <WindowButton aria-label="Restore">
        <svg width="16" height="16" viewBox="0 0 16 16" fill="none" stroke="#fff">
          <path d="M.5 3.500h12v12H.5zM3.500 3V.5h12v12H13" />
        </svg>
      </WindowButton>
      <WindowButton aria-label="Close">
        <svg width="16" height="16" viewBox="0 0 16 16"><path d="M0 0l16 16M16 0L0 16" stroke="#fff" strokeWidth="1.300" /></svg>
      </WindowButton>
    </TitleBar>
    <TabBar>
      <Tab $w={84} $kind="file">File</Tab>
      <Tab $w={82} $kind="active">Home</Tab>
      <Tab $w={82}>Share</Tab>
      <Tab $w={74}>View</Tab>
      <TabTools>
        <Chevron dir="up" size={20} color="#c4c4c4" weight={1} />
        <HelpButton aria-label="Help">?</HelpButton>
      </TabTools>
    </TabBar>

    <Ribbon>
      <Group $w={368}>
        <GroupBody>
          <Big w={100} art={<PinIcon size={30} />} lines={["Pin to Quick", "access"]} />
          <Big w={52} off art={<CopyArt />} lines={["Copy"]} />
          <Big w={68} off art={<PasteArt />} lines={["Paste"]} />
          <CommandList>
            <Command $off>{smallArt.cut}Cut</Command>
            <Command $off>{smallArt.path}Copy path</Command>
            <Command $off>{smallArt.pasteShortcut}Paste shortcut</Command>
          </CommandList>
        </GroupBody>
        <GroupName>Clipboard</GroupName>
      </Group>
      <Group $w={276}>
        <GroupBody>
          <Big w={62} off menu art={<MoveArt />} lines={["Move", "to"]} />
          <Big w={62} off menu art={<CopyToArt />} lines={["Copy", "to"]} />
          <Divider />
          <Big w={64} menu art={<DeleteArt />} lines={["Delete"]} />
          <Big w={62} off art={<RenameArt />} lines={["Rename"]} />
        </GroupBody>
        <GroupName>Organise</GroupName>
      </Group>
      <Group $w={205}>
        <GroupBody>
          <Big w={62} art={<FolderIcon w={28} h={41} />} lines={["New", "folder"]} />
          <CommandList>
            <Command>{smallArt.newItem}<span>New item<Caret /></span></Command>
            <Command>{smallArt.easy}<span>Easy access<Caret /></span></Command>
          </CommandList>
        </GroupBody>
        <GroupName>New</GroupName>
      </Group>
      <Group $w={182}>
        <GroupBody>
          <Big w={78} menu art={<CheckPage w={32} h={42} />} lines={["Properties"]} />
          <CommandList $gap={1}>
            <Command $off>{smallArt.open}<span>Open <Caret /></span></Command>
            <Command $off>{smallArt.edit}Edit</Command>
            <Command $off>{smallArt.history}History</Command>
          </CommandList>
        </GroupBody>
        <GroupName>Open</GroupName>
      </Group>
      <Group $w={157}>
        <GroupBody>
          <CommandList>
            <Command><SelectGrid on={[true, true, true, true]} />Select all</Command>
            <Command><SelectGrid on={[false, false, false, false]} />Select none</Command>
            <Command><SelectGrid on={[false, true, true, false]} />Invert selection</Command>
          </CommandList>
        </GroupBody>
        <GroupName>Select</GroupName>
      </Group>
    </Ribbon>

    <AddressRow>
      <NavButton $w={40} aria-label="Back">
        <svg width="20" height="16" viewBox="0 0 20 16"><path d="M20 8H1M8 1L1 8l7 7" stroke="#fff" strokeWidth="2" fill="none" /></svg>
      </NavButton>
      <NavButton $w={52} aria-label="Forward">
        <svg width="20" height="16" viewBox="0 0 20 16"><path d="M0 8h19M12 1l7 7-7 7" stroke="#7f7f7f" strokeWidth="2" fill="none" /></svg>
      </NavButton>
      <NavButton $w={18} aria-label="Recent locations">
        <svg width="14" height="9" viewBox="0 0 14 9"><path d="M1 1l6 6 6-6" stroke="#fff" strokeWidth="2" fill="none" /></svg>
      </NavButton>
      <NavButton $w={40} aria-label="Up">
        <svg width="16" height="20" viewBox="0 0 16 20"><path d="M8 20V1M1 8l7-7 7 7" stroke="#fff" strokeWidth="2" fill="none" /></svg>
      </NavButton>
      <AddressBox>
        <FolderIcon />
        <Crumbs>
          <CrumbArrow><Chevron dir="right" color="#8a8a8a" weight={3} /></CrumbArrow>
          {["This PC", "C partition (C:)", "Users", "nezih"].map((name) => (
            <Crumb href="#" key={name}>
              {name}
              <CrumbArrow><Chevron dir="right" color="#8a8a8a" weight={3} /></CrumbArrow>
            </Crumb>
          ))}
        </Crumbs>
        <NavButton $w={26} aria-label="Previous locations">
          <svg width="14" height="10" viewBox="0 0 14 10"><path d="M1 1l6 6 6-6" stroke="#8f8f8f" strokeWidth="3" fill="none" /></svg>
        </NavButton>
        <NavButton $w={24} aria-label="Refresh">
          <svg width="18" height="18" viewBox="0 0 18 18">
            <path d="M12 3a7 7 0 1 1-8 1" stroke="#8f8f8f" strokeWidth="3" fill="none" />
            <path d="M1 1h7v7H6V4L1 3z" fill="#8f8f8f" />
          </svg>
        </NavButton>
      </AddressBox>
      <SearchBox>
        <SearchInput placeholder="Search nezih" aria-label="Search nezih" />
        <svg width="17" height="17" viewBox="0 0 17 17" aria-hidden>
          <circle cx="11" cy="6" r="4.500" stroke="#8f8f8f" strokeWidth="2.500" fill="none" />
          <path d="M7.500 9.500L1 16" stroke="#8f8f8f" strokeWidth="3" />
        </svg>
      </SearchBox>
    </AddressRow>

    <Body>
      <Sidebar>
        {tree.map((group) => (
          <TreeGroup key={group[0].label + group.length}>
            {group.map((item) => (
              <TreeRow key={item.label}>
                <TreeLink href="#" $level={item.level} $active={item.active}>
                  <TreeArt $level={item.level}>{icons[item.icon]}</TreeArt>
                  <TreeText>{item.label}</TreeText>
                  {item.pin && <PinIcon />}
                </TreeLink>
              </TreeRow>
            ))}
          </TreeGroup>
        ))}
      </Sidebar>
      <ScrollBar size={89} />
      <Splitter />
      <FilePane>
        <FileTable>
          <colgroup>
            <Col $w={461} />
            <Col $w={243} />
            <Col $w={203} />
            <Col $w={135} />
            <Col />
          </colgroup>
          <thead>
            <tr>
              <HeadCell>
                <HeadName>
                  <SelectAllBox type="checkbox" aria-label="Select all items" />
                  Name
                </HeadName>
                <SortMark><Chevron dir="up" color="#9a9a9a" weight={1} /></SortMark>
              </HeadCell>
              <HeadCell>Date modified</HeadCell>
              <HeadCell>Type</HeadCell>
              <HeadCell>Size</HeadCell>
              <HeadCell as="td" />
            </tr>
          </thead>
          <tbody>
            {files.map(([icon, name, date]) => (
              <tr key={name}>
                <Cell>
                  <FileLink href="#" $encrypted={icon === "lockedDocuments"}>
                    {icons[icon]}
                    <FileName>{name}</FileName>
                  </FileLink>
                </Cell>
                <Cell>{date}</Cell>
                <Cell>File folder</Cell>
                <Cell />
                <Cell />
              </tr>
            ))}
          </tbody>
        </FileTable>
      </FilePane>
      <ScrollBar size={97} />
    </Body>

    <StatusBar>
      22 items
      <StatusMark />
      <ViewButton $on aria-label="Details view">
        <svg width="22" height="22" viewBox="0 0 22 22">
          {[1, 6, 11, 16].map((y) => (
            <g key={y}>
              <rect x="1" y={y} width="5" height="4.500" fill="#fff" />
              <rect x="3" y={y + 1} width="1.500" height="2" fill="#555" />
              <path d={`M8 ${y + 2}h5M16 ${y + 2}h5`} stroke="#8a8a8a" />
            </g>
          ))}
        </svg>
      </ViewButton>
      <ViewButton aria-label="Large icons view">{icons.pictures}</ViewButton>
    </StatusBar>

    <Taskbar>
      <StartButton aria-label="Start">
        <svg width="24" height="24" viewBox="0 0 24 24">
          <path d="M0 3l10-1v9H0zM11 2l13-2v11H11zM0 12h10v10L0 21zM11 12h13v12l-13-2z" fill="#fff" />
        </svg>
      </StartButton>
      <TaskSearch>
        <svg width="25" height="25" viewBox="0 0 25 25" aria-hidden>
          <circle cx="16" cy="9" r="8" stroke="#fff" strokeWidth="1.600" fill="none" />
          <path d="M10.500 14.500L1 24" stroke="#fff" strokeWidth="1.600" />
        </svg>
        <TaskSearchInput placeholder="Type here to search" aria-label="Type here to search" />
        <MimosaArt />
      </TaskSearch>
      <AppStrip>
        <AppButton aria-label="Task view">
          <svg width="24" height="24" viewBox="0 0 24 24" fill="none" stroke="#fff" strokeWidth="1.500">
            <path d="M1 1v3h15V1M1 23v-3h15v3M1 7h15v10H1zM22 0v6M22 11v13" />
            <path d="M20.500 7h3v3h-3z" fill="#fff" stroke="none" />
          </svg>
        </AppButton>
        <AppButton $bar="#76b9ed" $barInset={6} aria-label="Chrome"><ChromeLogo /></AppButton>
        <AppButton $bg="#6b696c" $bar="#76b9ed" aria-label="File Explorer"><ExplorerLogo /></AppButton>
        <AppButton aria-label="Calculator"><CalcLogo /></AppButton>
        <AppButton aria-label="Mail"><MailLogo /><Badge>14</Badge></AppButton>
        <AppButton aria-label="Steam"><SteamLogo /></AppButton>
        <AppButton aria-label="Store"><StoreLogo /></AppButton>
        <AppButton aria-label="Edge"><EdgeLogo /></AppButton>
        <AppButton aria-label="Secure Browser"><ShieldLogo /></AppButton>
        <AppButton aria-label="Settings"><GearLogo /></AppButton>
        <AppButton $bg="#a8622d" $bar="#ff7800" aria-label="NordVPN"><NordLogo /></AppButton>
      </AppStrip>
      <Tray>
        <NewsButton><CoinsArt />GBP...</NewsButton>
        <TrayButton $w={34} aria-label="Show hidden icons">
          <svg width="18" height="12" viewBox="0 0 18 12"><path d="M1 10l8-8 8 8" stroke="#fff" strokeWidth="1.500" fill="none" /></svg>
        </TrayButton>
        <TrayButton $w={40} aria-label="Battery">
          <svg width="25" height="18" viewBox="0 0 25 18" fill="none" stroke="#fff" strokeWidth="1.200">
            <path d="M8 5h15v12H5v-5M23 9h1.500v4H23" />
            <path d="M7 7h14v8H7z" fill="#fff" stroke="none" />
            <path d="M1 4h7v3c0 4-7 4-7 0zM3 0v4M6 0v4" fill="#262626" />
          </svg>
        </TrayButton>
        <TrayButton $w={40} aria-label="Network">
          <svg width="20" height="20" viewBox="0 0 20 20" fill="none" stroke="#fff" strokeWidth="1.300">
            <path d="M1 19A18 18 0 0 1 19 1M6 19A13 13 0 0 1 19 6M11 19a8 8 0 0 1 8-8" opacity=".85" />
            <circle cx="17" cy="17" r="2" fill="#fff" stroke="none" />
          </svg>
        </TrayButton>
        <TrayButton $w={40} aria-label="Pen menu">
          <svg width="22" height="22" viewBox="0 0 22 22" fill="none" stroke="#fff" strokeWidth="1.400">
            <path d="M16 1l3 2-8 14-4 3 1-5zM14 9c4-3 7-2 6 1s-5 4-7 3M9 10C4 9 0 13 1 17s6 3 8 1" />
          </svg>
        </TrayButton>
        <Clock>22:02<br />26/04/2024</Clock>
        <TrayButton $w={60} aria-label="Notifications">
          <svg width="26" height="25" viewBox="0 0 26 25" fill="none" stroke="#fff" strokeWidth="1.500">
            <path d="M1 1h24v18h-9l-4 4-4-4H1z" />
          </svg>
        </TrayButton>
        <TrayButton $w={60} aria-label="Copilot"><CopilotArt /></TrayButton>
        <PeekEdge />
      </Tray>
    </Taskbar>
  </Screen>
);

export default App;
